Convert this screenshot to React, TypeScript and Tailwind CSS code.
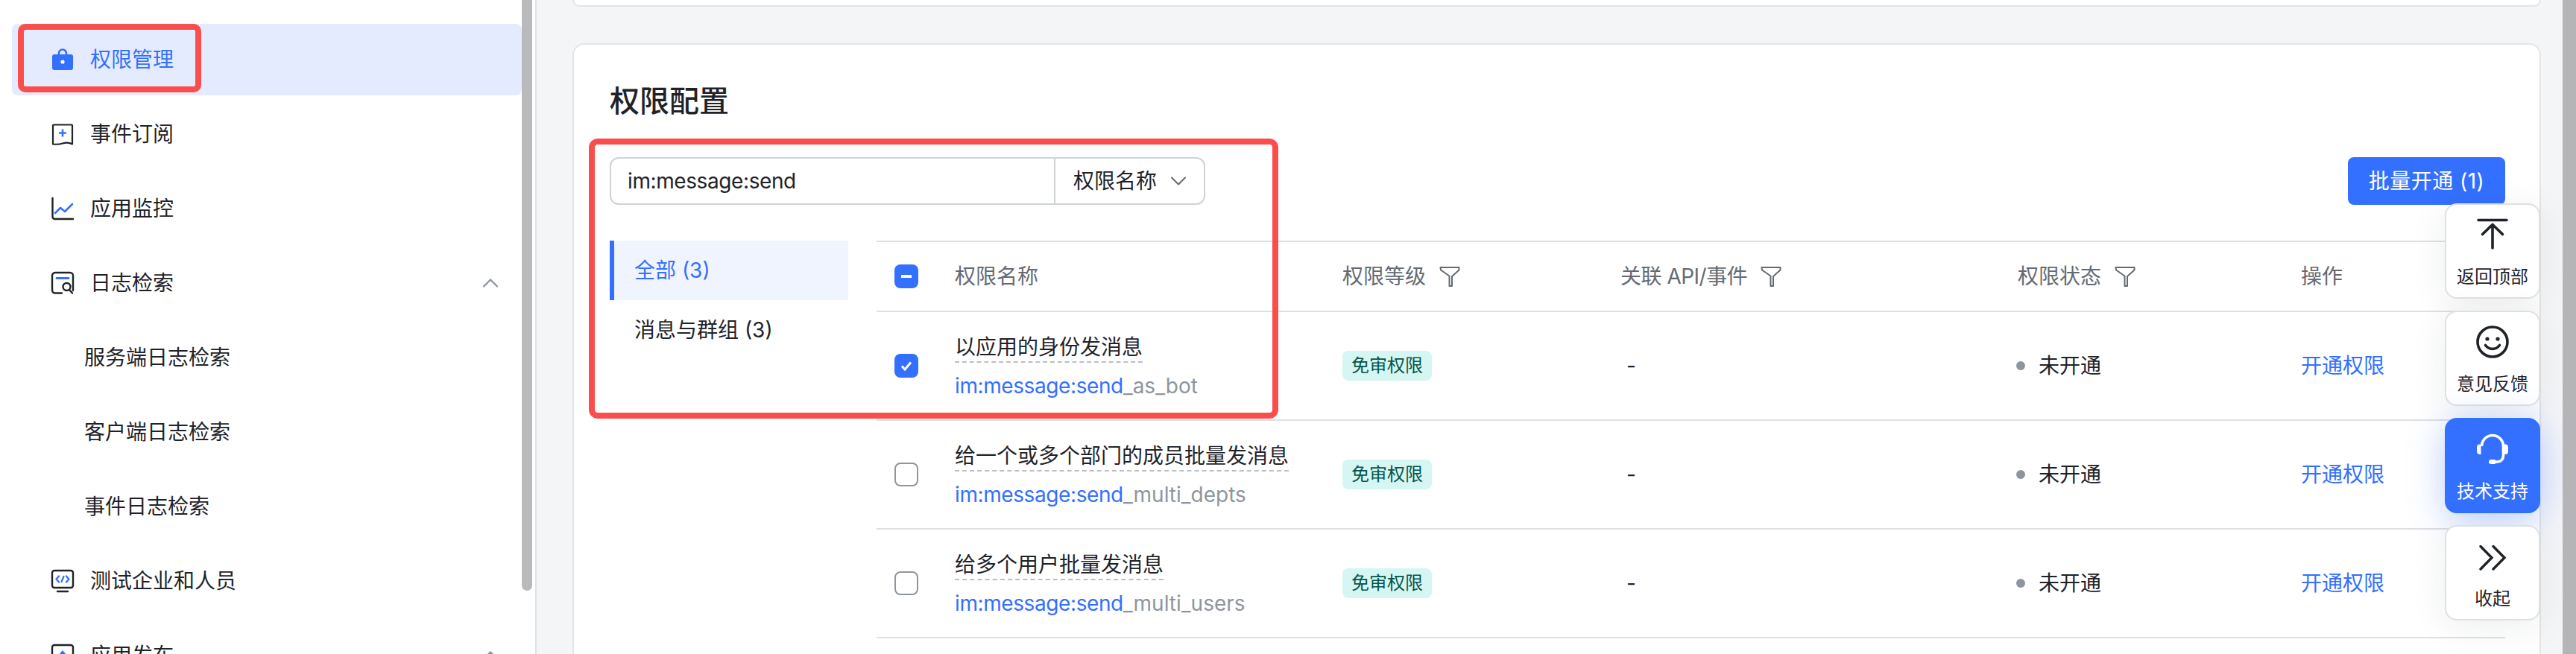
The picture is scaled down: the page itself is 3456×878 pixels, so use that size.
import { ChevronDown, ChevronUp } from "lucide-react"

const font = "font-['Inter','Noto_Sans_CJK_SC',sans-serif]"

function BagIcon() {
  return (
    <svg width="32" height="32" viewBox="0 0 32 32" fill="none">
      <path d="M11 10V7.500a5 5 0 0 1 10 0V10" stroke="#3370ff" strokeWidth="2.600" />
      <rect x="2" y="9" width="28" height="21" rx="3" fill="#3370ff" />
      <circle cx="16" cy="19" r="2.600" fill="#fff" />
    </svg>
  )
}

function SubscribeIcon() {
  return (
    <svg width="32" height="32" viewBox="0 0 32 32" fill="none">
      <path d="M4 3.500h24a1 1 0 0 1 1 1v25c-4-2.400-8-2.600-13-1s-9 1.400-13 1v-25a1 1 0 0 1 1-1z" stroke="#1f2329" strokeWidth="2.200" strokeLinejoin="round" />
      <path d="M16 9.500v10M11 14.500h10" stroke="#3370ff" strokeWidth="2.600" />
    </svg>
  )
}

function ChartIcon() {
  return (
    <svg width="32" height="32" viewBox="0 0 32 32" fill="none">
      <path d="M2.500 2v25a3 3 0 0 0 3 3H30" stroke="#1f2329" strokeWidth="2.400" strokeLinecap="round" />
      <path d="M6 22l7-7 6 5 10-10" stroke="#3370ff" strokeWidth="2.600" strokeLinecap="round" strokeLinejoin="round" />
    </svg>
  )
}

function LogIcon() {
  return (
    <svg width="32" height="32" viewBox="0 0 32 32" fill="none">
      <path d="M15 29.500H6a4 4 0 0 1-4-4V6a4 4 0 0 1 4-4h20a4 4 0 0 1 4 4v20" stroke="#1f2329" strokeWidth="2.400" strokeLinecap="round" />
      <path d="M8 9.500h16" stroke="#3370ff" strokeWidth="2.800" strokeLinecap="round" />
      <circle cx="21.500" cy="21" r="5" stroke="#1f2329" strokeWidth="2.400" />
      <path d="M25.500 25.500l3.500 4" stroke="#1f2329" strokeWidth="2.400" strokeLinecap="round" />
    </svg>
  )
}

function TestIcon() {
  return (
    <svg width="32" height="32" viewBox="0 0 32 32" fill="none">
      <rect x="2" y="2" width="28" height="23" rx="3" stroke="#1f2329" strokeWidth="2.400" />
      <path d="M11 9.500L7.500 13.500l3.500 4M21 9.500l3.500 4-3.500 4" stroke="#3370ff" strokeWidth="2.400" strokeLinecap="round" strokeLinejoin="round" />
      <path d="M17.500 10l-3 7" stroke="#3370ff" strokeWidth="2.200" strokeLinecap="round" />
      <path d="M9 30h14" stroke="#1f2329" strokeWidth="2.400" strokeLinecap="round" />
    </svg>
  )
}

function ReleaseIcon() {
  return (
    <svg width="32" height="32" viewBox="0 0 32 32" fill="none">
      <rect x="2" y="2" width="28" height="23" rx="3" stroke="#1f2329" strokeWidth="2.400" />
      <path d="M16 9l6 7H10z" fill="#3370ff" />
    </svg>
  )
}

function FilterIcon() {
  return (
    <svg width="28" height="28" viewBox="0 0 28 28" fill="none" className="shrink-0">
      <path d="M1.500 2h25v3.500L17 14V27h-3.500V13.500L2 5.500z" stroke="#646a73" strokeWidth="2" strokeLinejoin="round" />
    </svg>
  )
}

function NavItem({ icon, label, active, caret }: { icon?: React.ReactNode; label: string; active?: boolean; caret?: boolean }) {
  return (
    <div className={`flex h-24 items-center rounded-lg ${icon ? "pl-[52px]" : "pl-[97px]"} pr-[24px] ${active ? "bg-[#e5ebff] text-[#3370ff]" : "text-[#1f2329]"}`}>
      {icon}
      <span className={icon ? "ml-[21px]" : ""}>{label}</span>
      {caret && <ChevronUp size={36} strokeWidth={1.600} className="ml-auto text-[#8f959e]" />}
    </div>
  )
}

function Sidebar() {
  return (
    <aside className="relative h-full w-[720px] shrink-0 border-r-2 border-[#e0e1e3] bg-white pl-4 pr-[18px] pt-8 text-[28px]">
      <div className="flex flex-col gap-1">
        <NavItem active icon={<BagIcon />} label="权限管理" />
        <NavItem icon={<SubscribeIcon />} label="事件订阅" />
        <NavItem icon={<ChartIcon />} label="应用监控" />
        <NavItem icon={<LogIcon />} label="日志检索" caret />
        <NavItem label="服务端日志检索" />
        <NavItem label="客户端日志检索" />
        <NavItem label="事件日志检索" />
        <NavItem icon={<TestIcon />} label="测试企业和人员" />
        <NavItem icon={<ReleaseIcon />} label="应用发布" caret />
      </div>
      {/* sidebar scrollbar thumb */}
      <div className="absolute right-[4px] top-0 h-[793px] w-[14px] rounded-b-lg bg-[#b9babc]" />
      {/* annotation */}
      <div className="absolute left-6 top-8 h-[92px] w-[246px] rounded-[10px] border-8 border-[#f94e4b]" />
    </aside>
  )
}

const rows = [
  { name: "以应用的身份发消息", suffix: "_as_bot", checked: true },
  { name: "给一个或多个部门的成员批量发消息", suffix: "_multi_depts", checked: false },
  { name: "给多个用户批量发消息", suffix: "_multi_users", checked: false },
]

const colGrid = "grid grid-cols-[105px_520px_373px_533px_380px_274px]"

function PermissionTable() {
  return (
    <div className="mt-[48px] flex-1">
      <div className={`${colGrid} h-[96px] items-center border-y-2 border-[#dee0e3] text-[#646a73]`}>
        <div className="pl-6">
          <div className="flex h-8 w-8 items-center justify-center rounded-lg bg-[#3370ff]">
            <div className="h-[4px] w-[14px] bg-white" />
          </div>
        </div>
        <div>权限名称</div>
        <div className="flex items-center gap-[18px]">权限等级<FilterIcon /></div>
        <div className="flex items-center gap-[18px]"><span className="tracking-[-0.5px]">关联 API/事件</span><FilterIcon /></div>
        <div className="flex items-center gap-[18px]">权限状态<FilterIcon /></div>
        <div>操作</div>
      </div>
      {rows.map((r) => (
        <div key={r.name} className={`${colGrid} h-[146px] items-center border-b-2 border-[#dee0e3]`}>
          <div className="pl-6">
            {r.checked ? (
              <div className="flex h-8 w-8 items-center justify-center rounded-lg bg-[#3370ff]">
                <svg width="20" height="20" viewBox="0 0 20 20" fill="none">
                  <path d="M4 10.500l4 4.500 8-9.500" stroke="#fff" strokeWidth="3" />
                </svg>
              </div>
            ) : (
              <div className="h-8 w-8 rounded-lg border-2 border-[#8f959e]" />
            )}
          </div>
          <div className="flex flex-col items-start self-start pt-[28px]">
            <div className="whitespace-nowrap border-b-2 border-dashed border-[#bbbfc4] leading-[38px] text-[#1f2329]">{r.name}</div>
            <div className="mt-[11px] leading-[40px] text-[#8f959e]">
              <span className="tracking-[-0.4px] text-[#3370ff]">im:message:send</span>
              {r.suffix}
            </div>
          </div>
          <div>
            <span className="flex h-10 w-[120px] items-center justify-center rounded-lg bg-[#d5f6f2] text-[24px] text-[#04554a]">免审权限</span>
          </div>
          <div className="pl-2 text-[#1f2329]">-</div>
          <div className="flex items-center text-[#1f2329]">
            <span className="ml-[-2px] mr-[18px] h-3 w-3 rounded-full bg-[#8f959e]" />
            未开通
          </div>
          <div className="text-[#3370ff]">开通权限</div>
        </div>
      ))}
    </div>
  )
}

function FloatButton({ icon, label, primary }: { icon: React.ReactNode; label: string; primary?: boolean }) {
  return (
    <div
      className={`flex h-32 w-32 flex-col items-center rounded-2xl border-2 pt-[14px] text-[24px] ${
        primary
          ? "border-[#3370ff] bg-[#3370ff] text-white shadow-[0_8px_48px_rgba(51,112,255,0.35)]"
          : "border-[#dee0e3] bg-white text-[#1f2329] shadow-[0_8px_48px_rgba(31,35,41,0.08)]"
      }`}
    >
      <div className="h-12 w-12">{icon}</div>
      <div className="mt-[17px] leading-[36px]">{label}</div>
    </div>
  )
}

function FloatBar() {
  return (
    <div className="absolute right-12 top-[273px] flex flex-col gap-4">
      <FloatButton
        label="返回顶部"
        icon={
          <svg width="48" height="48" viewBox="0 0 48 48" fill="none" stroke="#1f2329" strokeWidth="3.600" strokeLinecap="round" strokeLinejoin="round">
            <path d="M5 6.500h38M24 14v30M10.500 25.500L24 12.500l13.500 13" />
          </svg>
        }
      />
      <FloatButton
        label="意见反馈"
        icon={
          <svg width="48" height="48" viewBox="0 0 48 48" fill="none">
            <circle cx="24" cy="26" r="20" stroke="#1f2329" strokeWidth="3.600" />
            <circle cx="17" cy="22" r="2.600" fill="#1f2329" />
            <circle cx="31" cy="22" r="2.600" fill="#1f2329" />
            <path d="M14.500 30.500c5 6.500 14 6.500 19 0" stroke="#1f2329" strokeWidth="3.600" strokeLinecap="round" />
          </svg>
        }
      />
      <FloatButton
        primary
        label="技术支持"
        icon={
          <svg width="48" height="48" viewBox="0 0 48 48" fill="none">
            <g transform="translate(0 3)">
              <path d="M9.500 19a14.500 14.500 0 0 1 29 0v13a8 8 0 0 1-8 8H26" stroke="#fff" strokeWidth="3.600" />
              <path d="M8.500 16.500V30H7a4 4 0 0 1-4-4v-5.500a4 4 0 0 1 4-4zM39.500 16.500V30H41a4 4 0 0 0 4-4v-5.500a4 4 0 0 0-4-4z" fill="#fff" />
              <rect x="19" y="37" width="10" height="6" rx="3" fill="#fff" />
            </g>
          </svg>
        }
      />
      <FloatButton
        label="收起"
        icon={
          <svg width="48" height="48" viewBox="0 0 48 48" fill="none" stroke="#1f2329" strokeWidth="3.400" strokeLinecap="round" strokeLinejoin="miter">
            <path d="M8 12.500L23 27.750 8 43M25 12.500L40 27.750 25 43" />
          </svg>
        }
      />
    </div>
  )
}

export default function App() {
  return (
    <div className={`relative flex h-[878px] w-[3456px] overflow-hidden bg-[#f4f5f7] ${font} text-[28px]`}>
      <Sidebar />
      <main className="relative flex-1 px-[48px]">
        <div className="h-[9px] rounded-b-2xl border-x-2 border-b-2 border-[#e3e4e6] bg-white" />
        <section className="mt-[49px] h-[900px] rounded-2xl border-2 border-[#e3e4e6] bg-white pl-[48px] pr-[46px]">
          <h2 className="mt-[52px] text-[40px] font-medium leading-[48px] text-[#1f2329]">权限配置</h2>
          <div className="mt-[51px] flex items-start justify-between">
            <div className="flex h-16 w-[799px] rounded-xl border-2 border-[#d0d3d6]">
              <div className="flex flex-1 items-center border-r-2 border-[#d0d3d6] pl-[22px] tracking-[-0.4px] text-[#1f2329]">im:message:send</div>
              <div className="flex w-[199px] items-center pl-[24px] text-[#1f2329]">
                权限名称
                <ChevronDown size={36} strokeWidth={1.400} className="ml-[11px] shrink-0 text-[#646a73]" />
              </div>
            </div>
            <button className="flex h-16 w-[211px] items-center justify-center rounded-lg bg-[#3370ff] tracking-[0.5px] text-white">批量开通 (1)</button>
          </div>
          <div className="flex">
            <div className="mt-[48px] w-[358px] shrink-0">
              <div className="flex h-20 w-[320px] items-center border-l-[6px] border-[#3370ff] bg-[#f0f4ff] pl-[27px] text-[#3370ff]">全部 (3)</div>
              <div className="flex h-20 items-center pl-[33px] text-[#1f2329]">消息与群组 (3)</div>
            </div>
            <PermissionTable />
          </div>
        </section>
        {/* annotation */}
        <div className="absolute left-[70px] top-[186px] h-[376px] w-[925px] rounded-[12px] border-8 border-[#f94e4b]" />
      </main>
      <FloatBar />
      {/* page scrollbar */}
      <div className="absolute right-0 top-0 h-full w-[18px] bg-[#b5b5b7]" />
    </div>
  )
}
